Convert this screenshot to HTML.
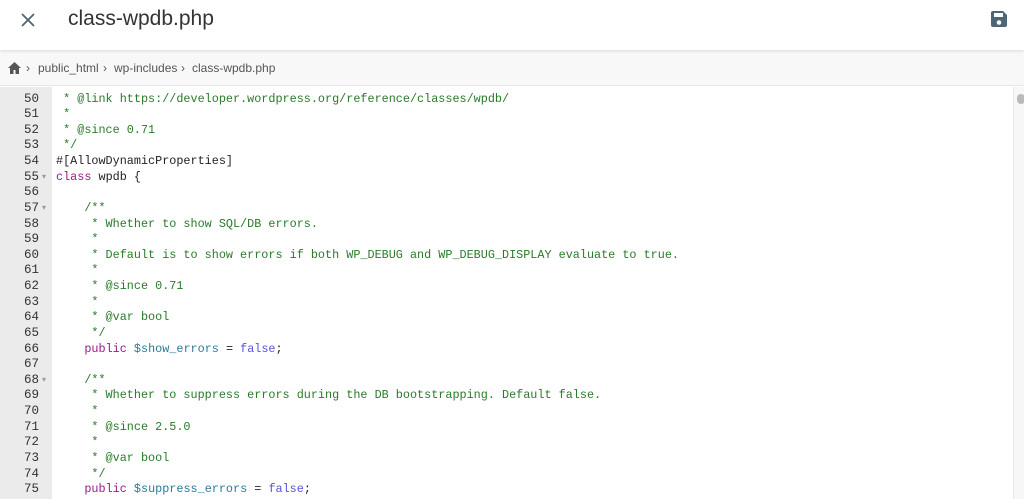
<!DOCTYPE html>
<html><head><meta charset="utf-8"><style>
*{margin:0;padding:0;box-sizing:border-box}
body{width:1024px;height:499px;overflow:hidden;background:#fff;font-family:"Liberation Sans",sans-serif;position:relative}
.hdr{position:absolute;left:0;top:0;width:1024px;height:50px;background:#fff;box-shadow:0 1px 3px rgba(0,0,0,.12);z-index:2}
.hdr .t{position:absolute;left:68px;top:7px;font-size:21px;color:#333}
.bc{position:absolute;left:0;top:50px;width:1024px;height:36px;background:#f8f8f8;border-bottom:1px solid #e6e6e6;font-size:12px;color:#555}
.bc span{position:absolute;top:11px}
.gut{position:absolute;left:0;top:87px;width:52px;height:412px;background:#ebebeb}
.sb{position:absolute;left:1013px;top:87px;width:11px;height:412px;background:#f7f7f7;border-left:1px solid #e8e8e8}
.sb div{position:absolute;left:3px;top:7px;width:8px;height:10px;border-radius:4px;background:#bbb}
.code{position:absolute;left:0;top:91.5px;font-family:"Liberation Mono",monospace;font-size:11.8px;line-height:15.64px}
.l{height:15.64px;position:relative;white-space:pre}
.n{position:absolute;left:0;width:39px;text-align:right;color:#333;font-size:12.5px}
.f{position:absolute;left:42px;color:#999;font-size:8px;top:0}
.c{position:absolute;left:56px}
.g{color:#2a7a2a}.k{color:#9b1a8c}.v{color:#2b7a9a}.b{color:#5555dd}.m{color:#222}
</style></head><body>
<div class="hdr">
<svg style="position:absolute;left:20px;top:12px" width="16" height="16" viewBox="0 0 16 16"><path d="M2 2L14 14M14 2L2 14" stroke="#4f6571" stroke-width="1.8"/></svg>
<div class="t">class-wpdb.php</div>
<svg style="position:absolute;left:990px;top:10px" width="18" height="18" viewBox="0 0 18 18"><path d="M1 3a2 2 0 0 1 2-2h10l4 4v10a2 2 0 0 1-2 2H3a2 2 0 0 1-2-2z" fill="#4d6673"/><rect x="4" y="3" width="9" height="4" fill="#fff"/><circle cx="9" cy="12.5" r="2.3" fill="#fff"/></svg>
</div>
<div class="bc">
<svg style="position:absolute;left:8px;top:12px" width="13" height="12" viewBox="0 0 13 12"><path d="M6.5 0L0 6h2v6h3.5V8h2v4H11V6h2z" fill="#555"/></svg>
<span style="left:26px">›</span><span style="left:38px">public_html</span><span style="left:103px">›</span><span style="left:114px">wp-includes</span><span style="left:181px">›</span><span style="left:192px">class-wpdb.php</span>
</div>
<div class="gut"></div>
<div class="sb"><div></div></div>
<div class="code"><div class="l"><span class="n">50</span><span class="c g"> * @link https://developer.wordpress.org/reference/classes/wpdb/</span></div><div class="l"><span class="n">51</span><span class="c g"> *</span></div><div class="l"><span class="n">52</span><span class="c g"> * @since 0.71</span></div><div class="l"><span class="n">53</span><span class="c g"> */</span></div><div class="l"><span class="n">54</span><span class="c m">#[AllowDynamicProperties]</span></div><div class="l"><span class="n">55</span><span class="f">▾</span><span class="c m"><span class="k">class</span> wpdb {</span></div><div class="l"><span class="n">56</span></div><div class="l"><span class="n">57</span><span class="f">▾</span><span class="c g">    /**</span></div><div class="l"><span class="n">58</span><span class="c g">     * Whether to show SQL/DB errors.</span></div><div class="l"><span class="n">59</span><span class="c g">     *</span></div><div class="l"><span class="n">60</span><span class="c g">     * Default is to show errors if both WP_DEBUG and WP_DEBUG_DISPLAY evaluate to true.</span></div><div class="l"><span class="n">61</span><span class="c g">     *</span></div><div class="l"><span class="n">62</span><span class="c g">     * @since 0.71</span></div><div class="l"><span class="n">63</span><span class="c g">     *</span></div><div class="l"><span class="n">64</span><span class="c g">     * @var bool</span></div><div class="l"><span class="n">65</span><span class="c g">     */</span></div><div class="l"><span class="n">66</span><span class="c m">    <span class="k">public</span> <span class="v">$show_errors</span> = <span class="b">false</span>;</span></div><div class="l"><span class="n">67</span></div><div class="l"><span class="n">68</span><span class="f">▾</span><span class="c g">    /**</span></div><div class="l"><span class="n">69</span><span class="c g">     * Whether to suppress errors during the DB bootstrapping. Default false.</span></div><div class="l"><span class="n">70</span><span class="c g">     *</span></div><div class="l"><span class="n">71</span><span class="c g">     * @since 2.5.0</span></div><div class="l"><span class="n">72</span><span class="c g">     *</span></div><div class="l"><span class="n">73</span><span class="c g">     * @var bool</span></div><div class="l"><span class="n">74</span><span class="c g">     */</span></div><div class="l"><span class="n">75</span><span class="c m">    <span class="k">public</span> <span class="v">$suppress_errors</span> = <span class="b">false</span>;</span></div></div>
</body></html>
